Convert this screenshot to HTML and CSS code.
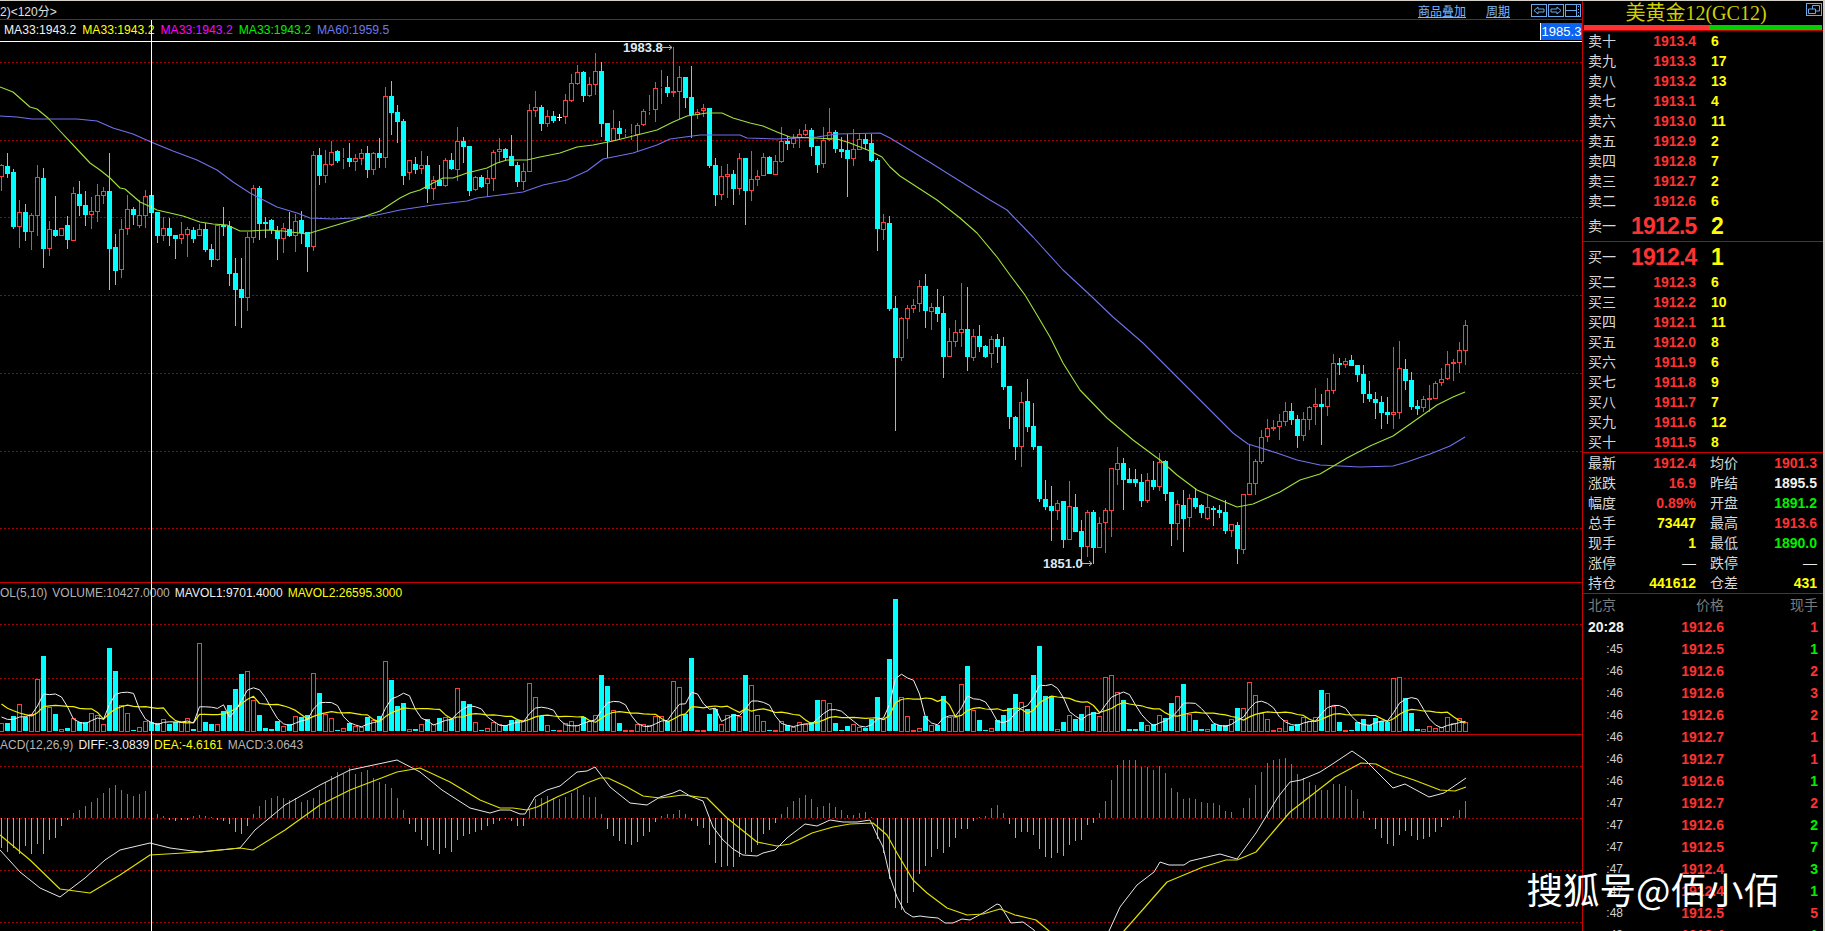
FILE: index.html
```html
<!DOCTYPE html>
<html lang="en">
<head>
    <meta charset="UTF-8">
    <meta name="viewport" content="width=device-width, initial-scale=1.0">
    <title>美黄金12(GC12)</title>
    <link rel="stylesheet" href="styles.css">
</head>
<body>

<div class="screen">
    <div class="charts">
        <div class="toolbar">
            <span class="period">2)&lt;120分&gt;</span>
            <a class="tool-link tool-overlay">商品叠加</a>
            <a class="tool-link tool-period">周期</a>
            <svg class="tool-btn" viewBox="0 0 16 13"><rect x=".5" y=".5" width="15" height="12"/><path d="M3 6.5 7 3v2h6v3H7v2z"/></svg>
            <svg class="tool-btn" viewBox="0 0 16 13"><rect x=".5" y=".5" width="15" height="12"/><path d="M13 6.5 9 3v2H3v3h6v2z"/></svg>
            <svg class="tool-btn" viewBox="0 0 16 13"><rect x=".5" y=".5" width="15" height="12"/><path d="M1 6.5h10M11.500 1v11M13.500 2v1M13.500 5v1M13.500 8v1M13.500 11v1"/></svg>
        </div>

        <div class="pane pane-price">
            <div class="legend">
                <span class="c-white">MA33:1943.2</span>
                <span class="c-yellow">MA33:1943.2</span>
                <span class="c-magenta">MA33:1943.2</span>
                <span class="c-green">MA33:1943.2</span>
                <span class="c-blue">MA60:1959.5</span>
            </div>
            <div class="price-tag">1985.3</div>
            <svg id="price-chart"></svg>
        </div>

        <div class="pane pane-vol">
            <div class="legend">
                <span class="c-grey">OL(5,10)</span>
                <span class="c-grey">VOLUME:10427.0000</span>
                <span class="c-white">MAVOL1:9701.4000</span>
                <span class="c-yellow">MAVOL2:26595.3000</span>
            </div>
            <svg id="vol-chart"></svg>
        </div>

        <div class="pane pane-macd">
            <div class="legend">
                <span class="c-grey">ACD(12,26,9)</span>
                <span class="c-white">DIFF:-3.0839</span>
                <span class="c-yellow">DEA:-4.6161</span>
                <span class="c-grey">MACD:3.0643</span>
            </div>
            <svg id="macd-chart"></svg>
        </div>

        <div class="crosshair"></div>
    </div>

    <aside class="quote">
        <div class="title">
            美黄金12(GC12)
            <svg class="restore-btn" viewBox="0 0 16 13"><rect x=".5" y=".5" width="15" height="12"/><path d="M6.500 6V2.500h7V8h-4M2.500 6h7v4.500h-7z"/></svg>
        </div>
        <div class="ratio"><div class="ratio-sell"></div><div class="ratio-buy"></div></div>

        <div class="book book-asks" id="asks"></div>
        <div class="book book-bids" id="bids"></div>

        <div class="stats">
            <span class="lbl">最新</span><span class="num c-red">1912.4</span><span class="lbl lbl2">均价</span><span class="num c-red">1901.3</span>
            <span class="lbl">涨跌</span><span class="num c-red">16.9</span><span class="lbl lbl2">昨结</span><span class="num c-white">1895.5</span>
            <span class="lbl">幅度</span><span class="num c-red">0.89%</span><span class="lbl lbl2">开盘</span><span class="num c-green">1891.2</span>
            <span class="lbl">总手</span><span class="num c-yellow">73447</span><span class="lbl lbl2">最高</span><span class="num c-red">1913.6</span>
            <span class="lbl">现手</span><span class="num c-yellow">1</span><span class="lbl lbl2">最低</span><span class="num c-green">1890.0</span>
            <span class="lbl">涨停</span><span class="num dash">—</span><span class="lbl lbl2">跌停</span><span class="num dash">—</span>
            <span class="lbl">持仓</span><span class="num c-yellow">441612</span><span class="lbl lbl2">仓差</span><span class="num c-yellow">431</span>
        </div>

        <div class="ticks" id="ticks">
            <span class="tick-head">北京</span><span class="tick-head right">价格</span><span class="tick-head right">现手</span>
        </div>
    </aside>

    <div class="watermark">搜狐号@佰小佰</div>
</div>

<script src="chart.js"></script>
</body>
</html>
```
FILE: styles.css
```css
html, body {
    margin: 0;
    background: #000;
    overflow: hidden;
}

body {
    font-family: "Liberation Sans", "Noto Sans CJK SC", sans-serif;
    color: #fff;
}

.screen {
    position: relative;
    display: flex;
    height: 930px;
    border-top: 1px solid #d4d0c8;
    border-right: 2px solid #d4d0c8;
    overflow: hidden;
}

.c-white { color: #f0f0f0; }
.c-grey { color: #b4b4b4; }
.c-yellow { color: #ffff00; }
.c-magenta { color: #ff00ff; }
.c-green { color: #00f000; }
.c-blue { color: #6a78f0; }
.c-red { color: #ff3232; }

/* chart column */
.charts {
    position: relative;
    width: 1582px;
    display: flex;
    flex-direction: column;
}

.toolbar {
    display: flex;
    align-items: center;
    height: 18px;
    border-bottom: 1px solid #c80000;
    font-size: 12px;
}

.period {
    color: #e0e0e0;
    margin-right: auto;
}

.tool-link {
    color: #7ab8ff;
    text-decoration: underline;
}

.tool-period {
    margin: 0 21px 0 20px;
}

.tool-btn {
    width: 16px;
    height: 13px;
    margin-right: 1px;
    fill: none;
    stroke: #6aa8e8;
    stroke-width: 1;
}

.pane {
    position: relative;
    border-bottom: 1px solid #c80000;
}

.pane svg {
    display: block;
    width: 1582px;
    height: 100%;
}

.pane-price { height: 562px; }
.pane-vol { height: 151px; }
.pane-macd { flex: 1; border-bottom: none; }

.legend {
    position: absolute;
    top: 0;
    left: 0;
    display: flex;
    gap: 5px;
    height: 20px;
    line-height: 20px;
    font-size: 12px;
    white-space: nowrap;
    z-index: 1;
}

.pane-price .legend {
    left: 4px;
    gap: 6px;
    font-size: 12.150px;
}

.price-tag {
    position: absolute;
    right: 0;
    top: 3px;
    width: 41px;
    height: 17px;
    line-height: 18px;
    border-left: 1px solid #fff;
    background: #0a64f0;
    color: #fff;
    font-size: 13px;
    text-align: center;
    z-index: 1;
}

.crosshair {
    position: absolute;
    left: 151px;
    top: 19px;
    bottom: 0;
    width: 1px;
    background: #fff;
    z-index: 2;
}

.peak-label {
    font-size: 13px;
    font-weight: bold;
    fill: #dfe8f2;
}

/* quote column */
.quote {
    width: 240px;
    border-left: 1px solid #c80000;
    overflow: hidden;
}

.title {
    position: relative;
    height: 24px;
    line-height: 24px;
    padding-right: 14px;
    text-align: center;
    font-family: "Liberation Serif", "Noto Sans CJK SC", serif;
    font-size: 20px;
    color: #d0d000;
}

.restore-btn {
    position: absolute;
    right: 1px;
    top: 2px;
    width: 16px;
    height: 13px;
    fill: none;
    stroke: #6aa8e8;
    stroke-width: 1;
}

.ratio {
    display: flex;
    height: 5px;
    padding: 0 1px;
    border-bottom: 1px solid #c80000;
}

.ratio-sell { width: 125px; background: #ff3232; }
.ratio-buy { flex: 1; background: #00d000; }

.book {
    border-bottom: 1px solid #c80000;
}

.book-row {
    display: grid;
    grid-template-columns: 43px 65px auto;
    padding-left: 5px;
    height: 20px;
    line-height: 20px;
    font-size: 14px;
    font-weight: bold;
}

.book-row .lbl { font-weight: normal; }
.book-row .price { color: #ff3232; text-align: right; }
.book-row .qty { color: #ffff00; padding-left: 15px; }

.book-row.top {
    height: 30px;
    line-height: 30px;
}

.book-row.top .price {
    font-size: 23px;
    letter-spacing: -.8px;
}

.book-row.top .qty { font-size: 23px; }

.lbl {
    color: #d8d8d8;
    font-size: 14px;
    font-weight: normal;
}

.stats {
    display: grid;
    grid-template-columns: 32px 76px 46px 75px;
    padding-left: 5px;
    grid-auto-rows: 20px;
    line-height: 20px;
    border-bottom: 1px solid #c80000;
}

.lbl2 { padding-left: 14px; }

.num {
    font-size: 14px;
    font-weight: bold;
    text-align: right;
}

.dash {
    color: #e8e8e8;
    font-weight: normal;
}

.ticks {
    display: grid;
    grid-template-columns: 35px 101px 94px;
    padding-left: 5px;
    grid-auto-rows: 22px;
    line-height: 22px;
    font-size: 14px;
    font-weight: bold;
}

.tick-head {
    color: #7c7c7c;
    font-weight: normal;
}

.right { text-align: right; }

.tick-time {
    color: #cfcfcf;
    font-size: 12px;
    font-weight: normal;
    text-align: right;
}

.tick-time.full {
    color: #f0f0f0;
    font-size: 14px;
    font-weight: bold;
}

.watermark {
    position: absolute;
    right: 43px;
    top: 866px;
    font-family: "Noto Sans CJK SC", sans-serif;
    font-size: 36.500px;
    line-height: 44px;
    color: #fff;
    white-space: nowrap;
    z-index: 3;
}
```
FILE: chart.js
```js
// body top, body bottom, wick top, wick bottom - screen pixels
const candles = [
    ['r',165,177,164,191],['c',166,174,153,178],['c',172,227,169,229],['r',212,227,200,248],['c',212,232,204,241],
    ['r',215,232,213,250],['r',177,216,165,236],['c',178,249,168,268],['r',229,249,221,256],['c',230,236,196,237],
    ['r',228,236,228,236],['c',225,240,216,249],['r',193,241,187,241],['c',194,206,181,216],['c',205,215,191,226],
    ['r',211,215,197,229],['r',195,212,184,222],['r',191,196,187,204],['c',191,249,153,290],['c',247,271,234,285],
    ['r',229,270,219,278],['r',209,229,195,235],['c',209,215,207,225],['r',215,226,200,228],['r',196,216,190,228],
    ['c',195,213,188,213],['c',212,236,212,243],['r',228,236,217,241],['c',228,236,218,246],['c',235,239,235,259],
    ['r',234,239,222,244],['r',229,235,227,257],['c',230,239,227,243],['r',229,236,224,236],['c',229,250,223,252],
    ['c',249,260,244,267],['r',225,260,225,261],['c',225,227,207,236],['c',226,274,221,286],['c',273,290,258,326],
    ['c',289,298,258,328],['r',237,298,232,311],['r',188,238,185,243],['c',188,224,186,240],['c',222,224,217,238],
    ['c',220,230,219,234],['c',231,239,226,260],['r',228,239,223,253],['c',229,236,212,237],['r',221,236,214,252],
    ['c',220,233,211,244],['c',232,247,232,272],['r',155,247,151,251],['c',155,176,148,185],['r',164,176,150,183],
    ['r',152,165,141,166],['c',151,161,150,163],['r',158,159,148,169],['c',158,162,143,167],['r',158,162,154,171],
    ['r',153,159,149,165],['c',153,170,146,178],['r',153,170,152,175],['c',153,158,138,168],['r',96,158,87,168],
    ['c',96,113,81,135],['c',112,122,105,143],['c',121,176,119,185],['r',160,173,160,180],['c',164,170,157,174],
    ['r',165,169,151,174],['c',165,189,156,203],['r',180,189,176,200],['c',180,186,165,186],['r',160,186,158,187],
    ['c',160,169,153,170],['r',141,170,127,181],['c',141,147,137,163],['c',146,191,146,196],['r',177,190,176,191],
    ['c',177,187,175,188],['r',178,184,170,197],['r',152,179,150,191],['r',149,152,138,163],['c',149,158,148,161],
    ['c',156,166,135,166],['c',165,182,162,187],['r',171,182,163,190],['r',110,172,104,172],['r',107,111,91,117],
    ['c',107,124,105,131],['r',116,124,110,127],['c',116,121,111,123],['w',117,118,114,121],['r',100,117,94,124],
    ['r',83,101,74,102],['r',72,84,65,85],['c',72,96,71,102],['r',84,96,77,97],['r',71,85,53,95],
    ['c',71,124,62,137],['c',123,141,123,158],['r',128,141,110,141],['c',128,134,121,140],['r',133,134,129,137],
    ['r',134,135,124,140],['r',125,135,123,151],['r',111,125,109,126],['r',111,112,95,115],['r',88,110,82,122],
    ['r',87,88,70,104],['c',87,93,76,97],['r',91,93,47,97],['r',77,92,66,119],['c',77,98,77,108],
    ['c',97,115,66,138],['r',112,115,109,119],['r',108,111,104,117],['c',108,166,108,168],['c',165,195,158,206],
    ['r',176,195,166,200],['r',174,177,164,198],['c',174,189,170,205],['r',158,189,153,195],['c',158,191,158,225],
    ['r',179,191,151,201],['r',176,180,170,186],['r',157,176,153,176],['c',157,174,156,174],['r',161,175,155,175],
    ['r',141,162,127,163],['c',141,144,136,150],['r',138,144,134,148],['r',134,138,129,148],['r',130,135,124,136],
    ['c',130,147,128,156],['c',146,165,146,173],['r',140,164,127,168],['r',132,140,108,141],['c',132,149,130,153],
    ['c',149,152,137,158],['c',150,159,134,197],['r',149,159,129,166],['r',139,150,134,150],['c',139,144,134,150],
    ['c',143,161,134,162],['c',160,229,158,251],['r',222,230,214,240],['c',223,309,216,311],['c',308,358,296,431],
    ['r',318,358,317,361],['r',308,319,305,339],['r',305,309,299,313],['r',286,304,280,312],['c',286,311,274,328],
    ['r',307,312,303,330],['c',307,314,289,322],['c',313,357,296,378],['r',341,357,328,357],['r',332,342,320,347],
    ['r',329,333,283,347],['c',329,357,287,371],['r',336,358,329,361],['c',336,347,325,352],['c',346,357,345,358],
    ['r',339,354,336,368],['c',339,347,334,363],['c',346,387,337,390],['c',386,417,386,429],['c',417,447,416,460],
    ['r',402,447,392,467],['c',401,427,379,432],['c',426,447,403,450],['c',446,499,446,502],['c',499,507,480,510],
    ['c',506,511,486,541],['r',503,511,500,520],['c',501,540,501,548],['r',506,540,481,540],['c',507,532,494,532],
    ['c',531,547,520,560],['r',512,547,510,557],['c',512,548,510,564],['r',523,548,517,548],['r',510,523,508,553],
    ['r',468,511,468,537],['r',463,470,447,485],['c',463,480,458,510],['c',479,483,468,483],['c',479,483,469,487],
    ['c',482,501,474,507],['r',480,501,473,503],['c',480,487,461,490],['r',462,487,453,491],['c',461,494,460,501],
    ['c',492,524,492,546],['r',504,524,500,540],['c',505,519,490,552],['r',498,518,494,527],['c',498,507,488,509],
    ['c',505,513,504,518],['r',507,519,495,520],['c',508,510,506,526],['c',510,513,505,518],['c',512,531,500,534],
    ['r',524,531,524,537],['c',525,549,522,564],['r',494,550,494,554],['r',483,495,444,495],['r',461,484,459,495],
    ['r',437,462,430,464],['r',428,437,419,442],['r',427,429,420,431],['r',421,427,414,440],['r',411,422,402,426],
    ['c',411,420,403,425],['c',419,436,415,448],['r',419,436,412,441],['r',407,420,406,430],['r',404,407,388,425],
    ['c',404,407,394,445],['r',390,407,378,416],['r',363,391,354,394],['c',363,365,358,375],['r',361,365,358,368],
    ['c',360,366,355,366],['c',365,375,365,382],['c',374,394,365,403],['c',394,399,381,402],['c',399,403,392,419],
    ['c',402,413,396,429],['c',412,415,397,424],['r',412,415,347,429],['r',368,413,341,419],['c',369,381,359,390],
    ['c',380,407,372,410],['c',406,409,400,415],['r',399,408,396,412],['r',398,400,385,412],['r',383,399,381,399],
    ['r',379,383,368,386],['r',364,379,351,380],['r',362,364,359,381],['r',350,363,342,373],['r',325,351,320,365]
];

// bar heights, colour follows the candle
const volumes = [
    8,8,15,27,14,17,52,75,24,17,2,3,13,9,9,18,16,7,83,60,26,18,1,4,10,9,8,12,7,9,9,13,2,88,9,7,7,20,26,42,
    57,60,31,16,3,2,10,5,7,15,14,16,58,38,17,13,1,3,8,5,4,14,11,15,70,51,25,28,2,2,7,12,7,13,14,12,43,30,27,9,
    1,3,9,7,6,11,11,11,48,34,15,6,1,1,8,10,6,14,10,16,56,45,21,8,1,1,7,7,6,15,15,10,50,44,17,73,1,1,17,22,
    7,16,17,15,56,46,16,10,1,1,10,6,4,9,7,9,31,31,28,8,1,5,7,4,3,12,34,12,72,132,34,15,1,3,15,6,6,35,14,14,
    47,65,21,11,1,3,11,16,23,37,29,22,56,85,35,35,2,9,16,12,17,25,19,15,54,56,39,31,2,2,9,6,7,16,13,28,35,47,
    17,11,2,2,7,6,6,12,23,23,49,36,18,12,1,3,11,5,7,14,10,14,41,38,25,9,1,1,9,12,6,13,10,9,53,54,33,18,2,2,
    5,3,4,14,8,13,9
];
const volHistory = [50,40,50,30,30,20,15,15,12];

// histogram, up is positive
const macdBars = [
    -30,-34,-30,-36,-28,-36,-26,-36,-22,-20,-8,-2,5,8,12,16,20,25,30,33,28,24,22,24,27,20,4,2,-2,-3,-2,-2,2,3,2,1,-2,-3,-6,-14,
    -16,-8,4,12,18,20,22,20,18,20,16,18,20,28,36,42,46,44,50,44,46,48,40,36,34,30,20,8,-6,-14,-22,-28,-32,-36,-30,-34,-22,-18,-16,-14,
    -12,-8,-6,-3,-1,-3,-8,-8,8,19,20,22,20,19,21,25,29,23,21,21,4,-11,-18,-23,-26,-27,-24,-18,-14,-4,2,4,4,8,4,-3,-8,-10,-27,-45,
    -49,-48,-49,-39,-36,-34,-27,-16,-12,-5,4,11,17,20,23,19,11,12,15,11,8,3,3,5,6,1,-21,-35,-61,-90,-92,-85,-74,-56,-48,-39,-31,-35,-29,-20,
    -11,-11,-3,1,2,10,13,5,-6,-20,-14,-14,-17,-31,-39,-40,-35,-38,-27,-23,-22,-7,-5,5,17,38,53,58,58,58,51,51,48,52,45,30,26,19,20,19,
    16,15,15,13,7,6,0,10,20,33,46,55,58,59,60,54,44,40,36,33,28,28,34,34,32,28,19,7,-2,-11,-20,-26,-28,-17,-13,-18,-22,-21,-19,-14,
    -9,-2,2,8,17
];

const maGreen = [[0,87],[13,92],[30,107],[37,109],[48,118],[60,131],[75,147],[90,163],[100,170],[110,178],[120,188],[125,189],[140,202],[151,207],[157,210],[170,213],[183,216],[200,222],[213,224],[227,225],[240,231],[250,231],[267,230],[283,231],[307,234],[320,230],[340,224],[360,218],[380,211],[400,198],[410,193],[420,190],[433,183],[443,178],[453,178],[467,173],[487,168],[497,163],[507,160],[527,160],[540,157],[560,153],[577,147],[593,145],[613,141],[633,136],[657,130],[673,122],[687,116],[707,113],[722,113],[733,118],[750,123],[763,126],[777,132],[790,137],[813,138],[837,139],[850,143],[870,151],[882,157],[890,167],[900,176],[937,200],[960,218],[977,233],[997,257],[1010,275],[1025,295],[1037,315],[1050,337],[1063,363],[1080,390],[1107,418],[1133,440],[1160,460],[1177,475],[1197,490],[1213,497],[1237,507],[1253,504],[1280,492],[1300,480],[1320,474],[1347,458],[1370,446],[1393,436],[1413,422],[1437,405],[1453,397],[1465,392]];
const maBlue = [[0,116],[17,117],[32,119],[40,119],[67,119],[77,119],[97,121],[113,128],[133,134],[151,142],[173,151],[197,160],[217,170],[233,182],[250,193],[277,207],[297,213],[310,218],[333,219],[353,218],[377,215],[400,210],[433,205],[467,201],[477,198],[523,192],[543,185],[567,180],[587,171],[603,159],[633,153],[657,145],[670,139],[700,135],[740,135],[747,138],[777,139],[817,137],[837,134],[880,133],[890,138],[900,144],[931,163],[990,200],[1007,210],[1033,237],[1063,270],[1090,295],[1113,317],[1143,343],[1173,373],[1207,407],[1233,433],[1248,444],[1277,453],[1297,460],[1320,465],[1360,467],[1393,466],[1407,462],[1430,454],[1450,446],[1465,437]];

const diffLine = [[0,850],[20,872],[40,888],[60,897],[85,878],[105,860],[120,850],[150,843],[170,848],[200,852],[240,848],[255,830],[285,805],[320,785],[350,770],[397,760],[420,772],[442,790],[470,808],[490,813],[500,810],[510,810],[520,814],[525,814],[535,797],[547,790],[560,786],[577,772],[587,771],[595,767],[610,787],[630,803],[647,805],[660,797],[673,793],[680,790],[690,796],[703,801],[713,827],[723,840],[733,849],[743,855],[757,856],[763,853],[775,850],[787,838],[805,824],[817,826],[830,820],[843,822],[857,822],[870,820],[877,835],[883,847],[890,877],[897,897],[905,912],[913,917],[920,916],[927,917],[938,918],[945,923],[953,923],[962,919],[970,920],[983,913],[997,904],[1000,905],[1011,923],[1023,922],[1034,930],[1045,950],[1100,950],[1109,931],[1120,907],[1137,885],[1154,872],[1160,862],[1169,865],[1184,865],[1190,861],[1220,854],[1237,859],[1256,833],[1278,797],[1290,782],[1301,780],[1320,772],[1331,765],[1352,751],[1365,760],[1393,788],[1405,784],[1429,797],[1444,793],[1466,778]];
const deaLine = [[0,835],[30,860],[60,889],[90,893],[120,875],[150,855],[200,852],[240,848],[253,850],[285,830],[320,805],[350,790],[397,772],[420,768],[450,782],[480,800],[500,808],[513,808],[527,810],[537,807],[557,797],[573,790],[587,783],[600,778],[608,778],[627,787],[643,796],[660,798],[683,795],[707,798],[727,818],[757,842],[777,846],[790,844],[812,833],[833,827],[850,824],[873,823],[887,835],[897,853],[913,880],[927,893],[947,908],[967,915],[983,914],[1000,909],[1015,915],[1036,920],[1049,931],[1060,950],[1110,950],[1124,931],[1167,882],[1203,867],[1226,860],[1237,860],[1256,852],[1290,812],[1335,777],[1361,763],[1376,764],[1393,773],[1414,780],[1440,790],[1455,791],[1466,787]];

const RED = '#ff3c3c';
const CYAN = '#00ffff';
const WIDTH = 1582;

function dotted(y) {
    return `<path d="M0 ${y + 0.5}H${WIDTH}" stroke="#a80000" stroke-dasharray="2 2" shape-rendering="crispEdges"/>`;
}

function line(points, color, width) {
    const pts = points.map(p => p.join(',')).join(' ');
    return `<polyline points="${pts}" fill="none" stroke="${color}" stroke-width="${width}" stroke-linejoin="round"/>`;
}

function candle(c, i) {
    const [kind, top, bottom, high, low] = c;
    const x = 6 * i - 1;
    const color = kind === 'c' ? CYAN : kind === 'w' ? '#fff' : RED;
    let s = `<rect x="${x + 2}" y="${high}" width="1" height="${top - high}" fill="${color}"/>`;
    s += `<rect x="${x + 2}" y="${bottom}" width="1" height="${low - bottom}" fill="${color}"/>`;
    if (kind === 'c' || kind === 'w') {
        s += `<rect x="${x}" y="${top}" width="5" height="${bottom - top}" fill="${color}"/>`;
    } else {
        s += `<rect x="${x + 0.5}" y="${top + 0.5}" width="4" height="${bottom - top - 1}" fill="#000" stroke="${color}"/>`;
    }
    return s;
}

function drawPrice() {
    const svg = document.getElementById('price-chart');
    svg.setAttribute('viewBox', `0 20 ${WIDTH} 562`);
    let s = `<path d="M0 41.500H${WIDTH}" stroke="#fff" shape-rendering="crispEdges"/>`;
    [62, 140, 217, 295, 373, 451, 528].forEach(y => { s += dotted(y); });
    s += `<g shape-rendering="crispEdges">${candles.map(candle).join('')}</g>`;
    s += line(maBlue, '#7070ec', 1.1);
    s += line(maGreen, '#a0e23c', 1.1);
    s += `<text class="peak-label" x="623" y="52">1983.8</text><path d="M662 47.500H672M669 45l3 2.500-3 2.500" stroke="#b8b8b8" fill="none"/>`;
    s += `<text class="peak-label" x="1043" y="568">1851.0</text><path d="M1082 563.500H1092M1089 561l3 2.500-3 2.500" stroke="#b8b8b8" fill="none"/>`;
    svg.innerHTML = s;
}

function movingAvg(n) {
    const all = volHistory.concat(volumes);
    return volumes.map((v, i) => {
        const end = i + volHistory.length + 1;
        const win = all.slice(end - n, end);
        const avg = win.reduce((a, b) => a + b, 0) / n;
        return [6 * i + 1.5, 731 - avg];
    });
}

function drawVol() {
    const svg = document.getElementById('vol-chart');
    svg.setAttribute('viewBox', `0 583 ${WIDTH} 151`);
    let s = dotted(624) + dotted(678);
    let bars = '';
    volumes.forEach((h, i) => {
        const x = 6 * i - 1;
        if (candles[i][0] === 'c') {
            bars += `<rect x="${x}" y="${731 - h}" width="5" height="${h}" fill="${CYAN}"/>`;
        } else {
            bars += `<rect x="${x + 0.5}" y="${731 - h + 0.5}" width="4" height="${h}" fill="#000" stroke="${RED}"/>`;
        }
    });
    s += `<g shape-rendering="crispEdges">${bars}</g>`;
    s += line(movingAvg(10), '#f0f000', 1.2);
    s += line(movingAvg(5), '#f0f0f0', 1);
    svg.innerHTML = s;
}

function drawMacd() {
    const svg = document.getElementById('macd-chart');
    svg.setAttribute('viewBox', `0 735 ${WIDTH} 196`);
    let s = dotted(766) + dotted(818) + dotted(870) + dotted(922);
    let bars = '';
    macdBars.forEach((v, i) => {
        const x = 6 * i + 1;
        const h = Math.abs(v);
        const y = v > 0 ? 818 - h : 818;
        bars += `<rect x="${x}" y="${y}" width="1" height="${h}" fill="${v > 0 ? RED : '#20e0e8'}"/>`;
    });
    s += `<g shape-rendering="crispEdges">${bars}</g>`;
    s += line(diffLine, '#e8e8e8', 1);
    s += line(deaLine, '#e0e000', 1.2);
    svg.innerHTML = s;
}

function fillBook(id, rows) {
    document.getElementById(id).innerHTML = rows.map((r, i) => {
        const top = r[3] ? ' top' : '';
        return `<div class="book-row${top}"><span class="lbl">${r[0]}</span><span class="price">${r[1]}</span><span class="qty">${r[2]}</span></div>`;
    }).join('');
}

function fillTicks() {
    const rows = [
        ['20:28','1912.6','1','r'],[':45','1912.5','1','g'],[':46','1912.6','2','r'],[':46','1912.6','3','r'],
        [':46','1912.6','2','r'],[':46','1912.7','1','r'],[':46','1912.7','1','r'],[':46','1912.6','1','g'],
        [':47','1912.7','2','r'],[':47','1912.6','2','g'],[':47','1912.5','7','g'],[':47','1912.4','3','g'],
        [':47','1912.4','1','g'],[':48','1912.5','5','r'],[':48','1912.4','1','g']
    ];
    let s = '';
    rows.forEach(r => {
        const full = r[0].length > 3 ? ' full' : '';
        s += `<span class="tick-time${full}">${r[0]}</span>`;
        s += `<span class="c-red right">${r[1]}</span>`;
        s += `<span class="${r[3] === 'r' ? 'c-red' : 'c-green'} right">${r[2]}</span>`;
    });
    document.getElementById('ticks').innerHTML += s;
}

drawPrice();
drawVol();
drawMacd();

fillBook('asks', [
    ['卖十','1913.4',6],['卖九','1913.3',17],['卖八','1913.2',13],['卖七','1913.1',4],['卖六','1913.0',11],
    ['卖五','1912.9',2],['卖四','1912.8',7],['卖三','1912.7',2],['卖二','1912.6',6],['卖一','1912.5',2,true]
]);
fillBook('bids', [
    ['买一','1912.4',1,true],['买二','1912.3',6],['买三','1912.2',10],['买四','1912.1',11],['买五','1912.0',8],
    ['买六','1911.9',6],['买七','1911.8',9],['买八','1911.7',7],['买九','1911.6',12],['买十','1911.5',8]
]);
fillTicks();
```
